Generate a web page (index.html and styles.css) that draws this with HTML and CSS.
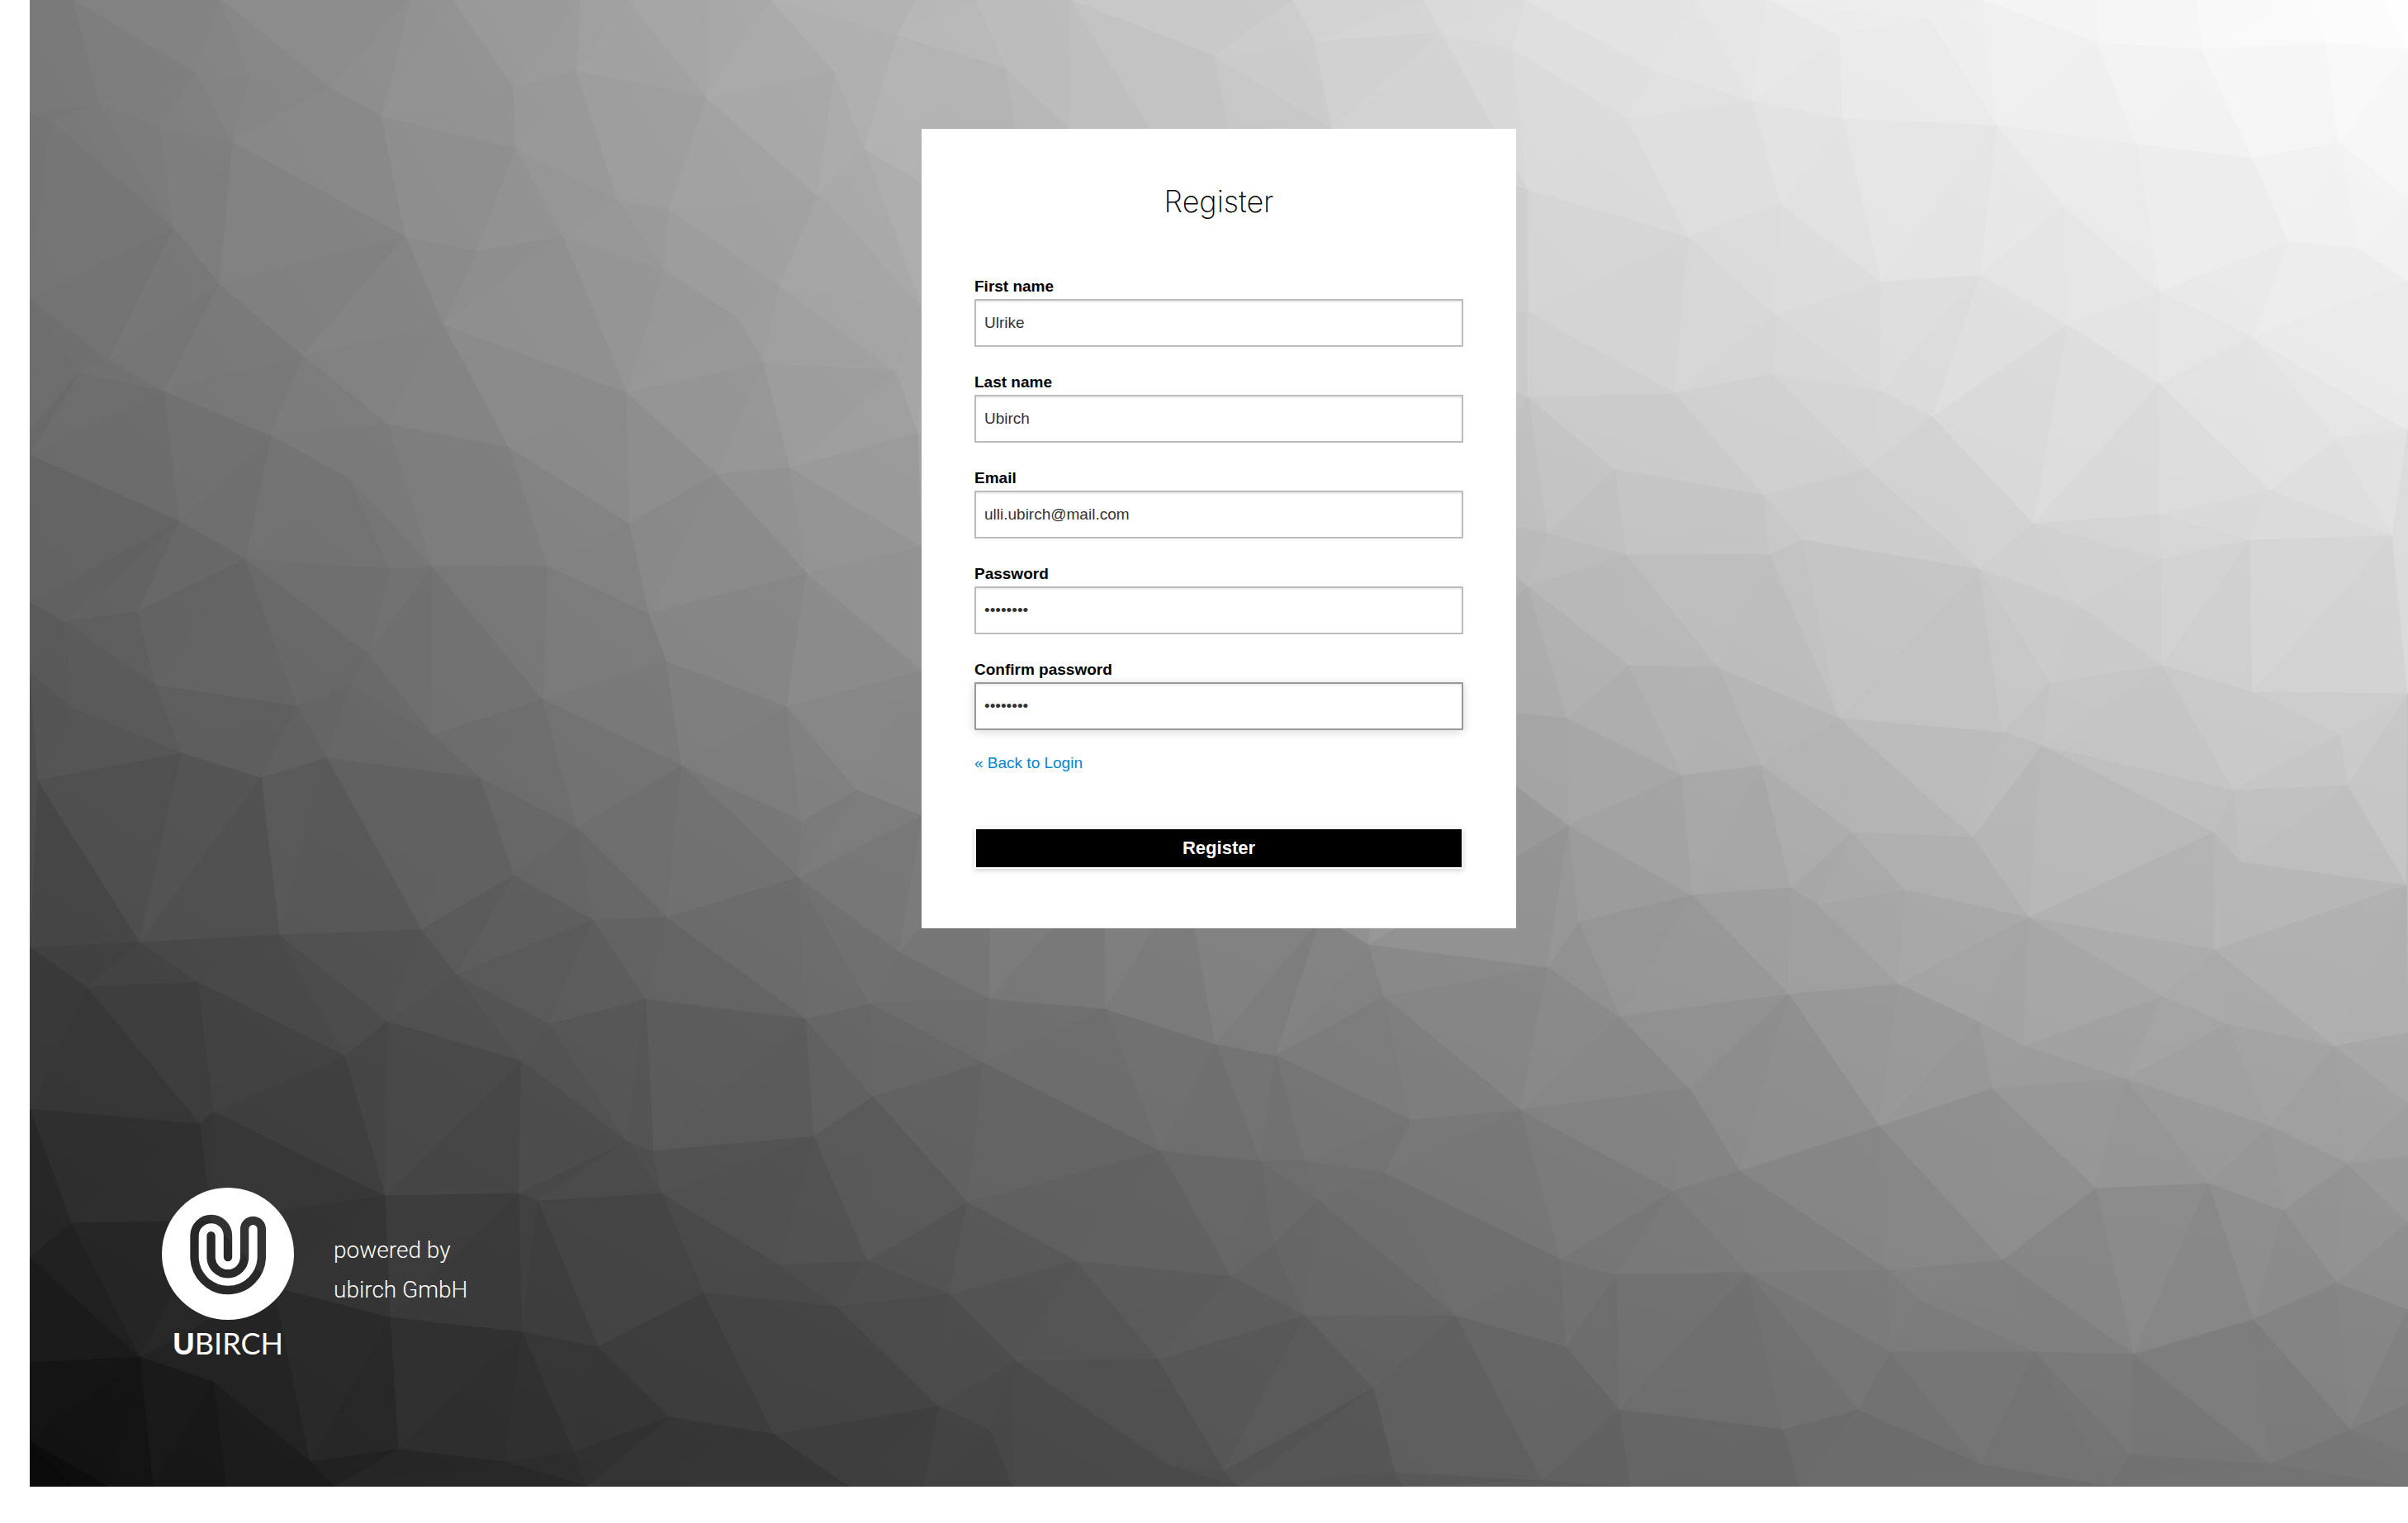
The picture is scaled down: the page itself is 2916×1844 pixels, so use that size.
FILE: index.html
```html
<!DOCTYPE html>
<html lang="en">
<head>
<meta charset="utf-8">
<title>Register</title>
<link rel="stylesheet" href="styles.css">
</head>
<body>
<div class="page">
  <svg class="mesh" id="mesh" viewBox="36 0 2880 1800" preserveAspectRatio="none" aria-hidden="true"></svg>

  <main class="card">
    <h1 class="card-title">Register</h1>
    <form class="form">
      <div class="field">
        <label for="firstName">First name</label>
        <input id="firstName" type="text" value="Ulrike">
      </div>
      <div class="field">
        <label for="lastName">Last name</label>
        <input id="lastName" type="text" value="Ubirch">
      </div>
      <div class="field">
        <label for="email">Email</label>
        <input id="email" type="text" value="ulli.ubirch@mail.com">
      </div>
      <div class="field">
        <label for="password">Password</label>
        <input id="password" type="password" value="ulrike12">
      </div>
      <div class="field">
        <label for="confirm">Confirm password</label>
        <input id="confirm" class="active" type="password" value="ulrike12">
      </div>
      <a class="back" href="#login">« Back to Login</a>
      <button class="submit" type="submit">Register</button>
    </form>
  </main>

  <footer class="brand">
    <div class="logo">
      <svg class="logo-mark" viewBox="79 84 478 478" aria-hidden="true">
        <mask id="print">
          <rect x="79" y="84" width="478" height="478" fill="#fff"/>
          <path d="M318 335V258A60.500 60.500 0 0 0 197 258V333A121.500 121.500 0 0 0 440 333V234A31 31 0 0 0 378 234V335A60.500 60.500 0 0 1 257 335V258" fill="none" stroke="#000" stroke-width="31" stroke-linecap="round"/>
        </mask>
        <circle cx="318" cy="323" r="239" fill="#fff" mask="url(#print)"/>
      </svg>
      <span class="logo-word"><b>U</b>BIRCH</span>
    </div>
    <p class="powered">powered by<br>ubirch GmbH</p>
  </footer>
</div>
<script src="mesh.js"></script>
</body>
</html>
```
FILE: styles.css
```css
* {
  box-sizing: border-box;
}

body {
  margin: 0;
  background: #fff;
  font-family: "Liberation Sans", Arial, sans-serif;
  font-size: 19px;
  color: #000;
}

.page {
  position: relative;
  z-index: 0;
  display: flex;
  flex-direction: column;
  justify-content: space-between;
  min-height: calc(100vh - 44px);
  margin: 0 0 44px 36px;
  padding: 156px 160px 154px;
  background: linear-gradient(30deg, #0c0c0c, #888 50%, #fff);
}

/* Faceted backdrop behind the content */
.mesh {
  position: absolute;
  inset: 0;
  z-index: -1;
  width: 100%;
  height: 100%;
}

.card {
  align-self: center;
  width: 100%;
  max-width: 720px;
  padding: 56px 64px 71px;
  background: #fff;
  border-bottom: 1px solid #eee;
}

.card-title {
  margin: 0 0 60px;
  font-family: Inter, "Liberation Sans", sans-serif;
  font-size: 36px;
  font-weight: 200;
  line-height: 64px;
  text-align: center;
}

.form {
  display: flex;
  flex-direction: column;
}

.field {
  display: flex;
  flex-direction: column;
  gap: 4px;
  margin-bottom: 32px;
}

.field:last-of-type {
  margin-bottom: 28px;
}

.field label {
  font-weight: bold;
  line-height: 22px;
}

.field input {
  width: 100%;
  height: 58px;
  padding: 0 10px;
  border: 2px solid #bbb;
  border-radius: 1px;
  background: #fff;
  box-shadow: inset 0 2px 2px rgba(0, 0, 0, 0.08);
  font: inherit;
  color: #333;
  outline: none;
}

.field input.active {
  border-color: #999;
  box-shadow: inset 0 2px 2px rgba(0, 0, 0, 0.08), 0 2px 12px rgba(0, 0, 0, 0.16);
}

.back {
  align-self: flex-start;
  line-height: 24px;
  color: #0088ce;
  text-decoration: none;
}

.submit {
  height: 50px;
  margin-top: 66px;
  padding: 0;
  border: 2px solid #fff;
  background: #000;
  box-shadow: 0 2px 6px rgba(0, 0, 0, 0.18);
  font-family: inherit;
  font-size: 22px;
  font-weight: bold;
  color: #fff;
}

.brand {
  display: flex;
  gap: 48px;
}

.logo {
  display: flex;
  flex-direction: column;
  align-items: center;
  gap: 8px;
  width: 160px;
  color: #fff;
}

.logo-mark {
  display: block;
  width: 160px;
  height: 160px;
}

.logo-word {
  font-family: Lato, sans-serif;
  font-size: 36px;
  line-height: 40px;
}

.logo-word b {
  font-weight: 900;
}

.powered {
  margin: 52px 0 0;
  font-family: Roboto, "Liberation Sans", sans-serif;
  font-size: 28px;
  font-weight: 300;
  line-height: 48px;
  color: #fff;
}
```
FILE: mesh.js
```js
// Corner points of the facets, as x,y pairs.
const points = `
36,0 89,0 268,0 497,0 548,0 702,0 759,0 855,0 934,0 1110,0 1182,0 1296,0 1565,0 1724,0 1847,0 2054,0 2140,0 2400,0 2540,0 2660,0 2790,0 2885,0 2916,0
36,138 61,146 121,126 236,89 303,95 399,106 462,141 281,172 195,155 622,106 625,181 698,86 855,118 990,237 810,253 749,244 491,287 577,304 682,287 944,347 804,327 265,344 210,276 367,431 536,393 36,361 131,436 198,474 893,385 925,439 759,476 469,514 616,542 328,528 36,551 868,574 957,566 424,580 217,631 762,634 297,677 472,689 523,686 663,686 977,694 785,743 166,741 77,752 36,730 36,815 807,801 188,830 446,792 657,847 953,856 424,830 360,855 89,858 523,890 96,451 36,522
45,945 220,912 316,942 396,918 581,942 826,927 970,994 699,1002 622,1060 967,1062 807,1111 718,1114 510,1126 338,1132 169,1141 552,1180 664,1240 782,1210 976,1234 105,1195 239,1189 469,1237 418,1279 632,1285 36,1343 242,1361 258,1346 466,1448 628,1445 759,1382 791,1394 986,1376 801,1445 651,1454 86,1481 255,1478 944,1532 852,1565 472,1595 632,1613 724,1631 169,1643 258,1673 332,1559 482,1755 810,1716 938,1737 376,1770 612,1770 695,1758 36,1650 36,1523 36,1147 36,1745 89,1800 131,1800 185,1800 274,1800 405,1800 711,1800
1089,1152 1054,1216 1198,1209 1338,1221 1472,1264 1545,1278 1657,1143 1676,1207 1874,1171 1912,1116 1957,1230 1191,1287 1057,1328 1172,1456 1051,1527 1405,1394 1708,1356 1842,1344 1676,1420 1580,1406 1596,1453 1542,1506 1526,1406 1491,1546 1303,1527 1150,1567 1580,1593 1762,1593 1890,1525 1958,1543 1896,1631 1402,1646 1230,1648 1663,1681 1961,1707 1137,1703 1013,1582 1482,1781 1198,1731 1415,1774 1689,1783 1867,1793 1029,1800 1118,1800 1226,1800 1500,1800 1700,1800
1200,1020 1338,1050 1435,1060 1600,1110 1300,800 1500,700 1700,850 1400,450 1650,400 1250,300 1500,220 1750,620
1011,87 1086,43 1218,83 1470,67 1592,50 1745,40 1832,60 1613,156 1296,156 1392,156 1047,181 1085,450 1117,812 1117,662 1038,956 1117,987 1112,525 1117,375 995,237
2227,43 2336,23 2003,86 1969,144 2122,123 2231,144 2418,152 2540,52 2666,60 2816,52 2588,175 2727,192 2833,172 2044,287 2156,247 2499,250 2771,293 2856,301 2278,342 2397,333 2149,382 2615,353 2503,393 2727,408 2027,476 2146,453 2615,465 2340,505 2278,474 2829,531 2887,505 1955,568 2136,600 2261,568 2462,634 2615,623 2748,594 2897,649 1874,646 1969,672 2142,672 2183,654 2397,689 2516,732 2724,654 2618,677 1972,806 2081,809 2227,870 2618,806 2482,827 2727,838 2833,890 2425,887 1898,870 1850,230 1850,378 1850,480 1850,710
2916,60 2916,240 2916,340 2916,520 2916,840 2036,939 2133,927 2473,903 2704,957 2843,951 1900,999 2049,1084 2169,1075 2243,1008 2201,1096 2308,1078 2389,1014 2457,1111 2681,1008 2713,1044 2914,1072 2681,1150 2299,1192 2166,1204 1962,1231 2396,1237 2451,1267 2619,1207 2697,1240 2827,1267 2046,1318 2412,1318 2574,1306 2749,1364 2276,1364 2843,1409 2107,1418 2026,1442 2538,1439 2674,1433 2765,1466 2425,1526 2286,1538 2117,1541 2830,1553 2729,1598 2584,1640 2324,1574 2289,1637 2464,1637 2159,1731 2250,1707 2846,1731 2749,1773 2580,1761 2399,1773 2916,1250 2916,1335 2916,1400 2916,1480 2916,1585 2916,1700 2916,1760 1975,1800 2179,1800 2555,1800 2916,1800 36,1800
`.trim().split(/\s+/).map(pair => pair.split(',').map(Number));

// Grey levels of the backdrop on a coarse grid.
const gridX = [36, 500, 1000, 1500, 1900, 2400, 2916];
const gridY = [0, 450, 900, 1350, 1800];
const levels = [
  [122, 148, 177, 204, 226, 242, 255],
  [108, 132, 160, 186, 207, 221, 235],
  [82, 104, 132, 150, 168, 192, 204],
  [46, 70, 93, 112, 129, 149, 162],
  [8, 36, 56, 78, 94, 108, 116],
];

function locate(grid, v) {
  let i = 0;
  while (i < grid.length - 2 && v > grid[i + 1]) i++;
  const t = (v - grid[i]) / (grid[i + 1] - grid[i]);
  return [i, Math.min(1, Math.max(0, t))];
}

function grey(x, y) {
  const [i, s] = locate(gridX, x);
  const [j, t] = locate(gridY, y);
  const top = levels[j][i] * (1 - s) + levels[j][i + 1] * s;
  const low = levels[j + 1][i] * (1 - s) + levels[j + 1][i + 1] * s;
  return top * (1 - t) + low * t;
}

function circumcircle(a, b, c) {
  const d = 2 * (a[0] * (b[1] - c[1]) + b[0] * (c[1] - a[1]) + c[0] * (a[1] - b[1]));
  const a2 = a[0] ** 2 + a[1] ** 2;
  const b2 = b[0] ** 2 + b[1] ** 2;
  const c2 = c[0] ** 2 + c[1] ** 2;
  const x = (a2 * (b[1] - c[1]) + b2 * (c[1] - a[1]) + c2 * (a[1] - b[1])) / d;
  const y = (a2 * (c[0] - b[0]) + b2 * (a[0] - c[0]) + c2 * (b[0] - a[0])) / d;
  return { x, y, r: (a[0] - x) ** 2 + (a[1] - y) ** 2 };
}

// Bowyer-Watson triangulation.
function triangulate(pts) {
  const n = pts.length;
  const all = pts.concat([[-60000, -50000], [64000, -50000], [1500, 90000]]);
  const make = (i, j, k) => ({ v: [i, j, k], c: circumcircle(all[i], all[j], all[k]) });
  let tris = [make(n, n + 1, n + 2)];
  for (let p = 0; p < n; p++) {
    const [px, py] = all[p];
    const edges = new Map();
    tris = tris.filter(t => {
      if ((px - t.c.x) ** 2 + (py - t.c.y) ** 2 >= t.c.r) return true;
      for (let e = 0; e < 3; e++) {
        const i = t.v[e], j = t.v[(e + 1) % 3];
        const key = Math.min(i, j) + '-' + Math.max(i, j);
        if (edges.has(key)) edges.delete(key);
        else edges.set(key, [i, j]);
      }
      return false;
    });
    for (const [i, j] of edges.values()) tris.push(make(i, j, p));
  }
  return tris.filter(t => t.v.every(i => i < n)).map(t => t.v.map(i => pts[i]));
}

const seen = new Set();
const corners = points.filter(p => !seen.has(p.join()) && seen.add(p.join()));
const INNER = 0.12;
const SPAN = 200;
let defs = '';
let faces = '';

triangulate(corners).forEach((t, n) => {
  const x = (t[0][0] + t[1][0] + t[2][0]) / 3;
  const y = (t[0][1] + t[1][1] + t[2][1]) / 3;
  const base = grey(x, y);
  const gx = (grey(x + 40, y) - grey(x - 40, y)) / 80;
  const gy = (grey(x, y + 40) - grey(x, y - 40)) / 80;
  const len = Math.hypot(gx, gy) || 1;
  const dx = gx / len * SPAN, dy = gy / len * SPAN;
  const swing = len * SPAN * INNER;
  const tone = v => { const k = Math.round(Math.min(255, Math.max(0, v))); return `rgb(${k},${k},${k})`; };
  defs += `<linearGradient id="g${n}" gradientUnits="userSpaceOnUse" x1="${x - dx}" y1="${y - dy}" x2="${x + dx}" y2="${y + dy}">` +
    `<stop offset="0" stop-color="${tone(base - swing)}"/><stop offset="1" stop-color="${tone(base + swing)}"/></linearGradient>`;
  faces += `<polygon points="${t.map(p => p.join()).join(' ')}" fill="url(#g${n})" stroke="url(#g${n})" stroke-width="1"/>`;
});

document.getElementById('mesh').innerHTML = `<defs>${defs}</defs>${faces}`;
```
